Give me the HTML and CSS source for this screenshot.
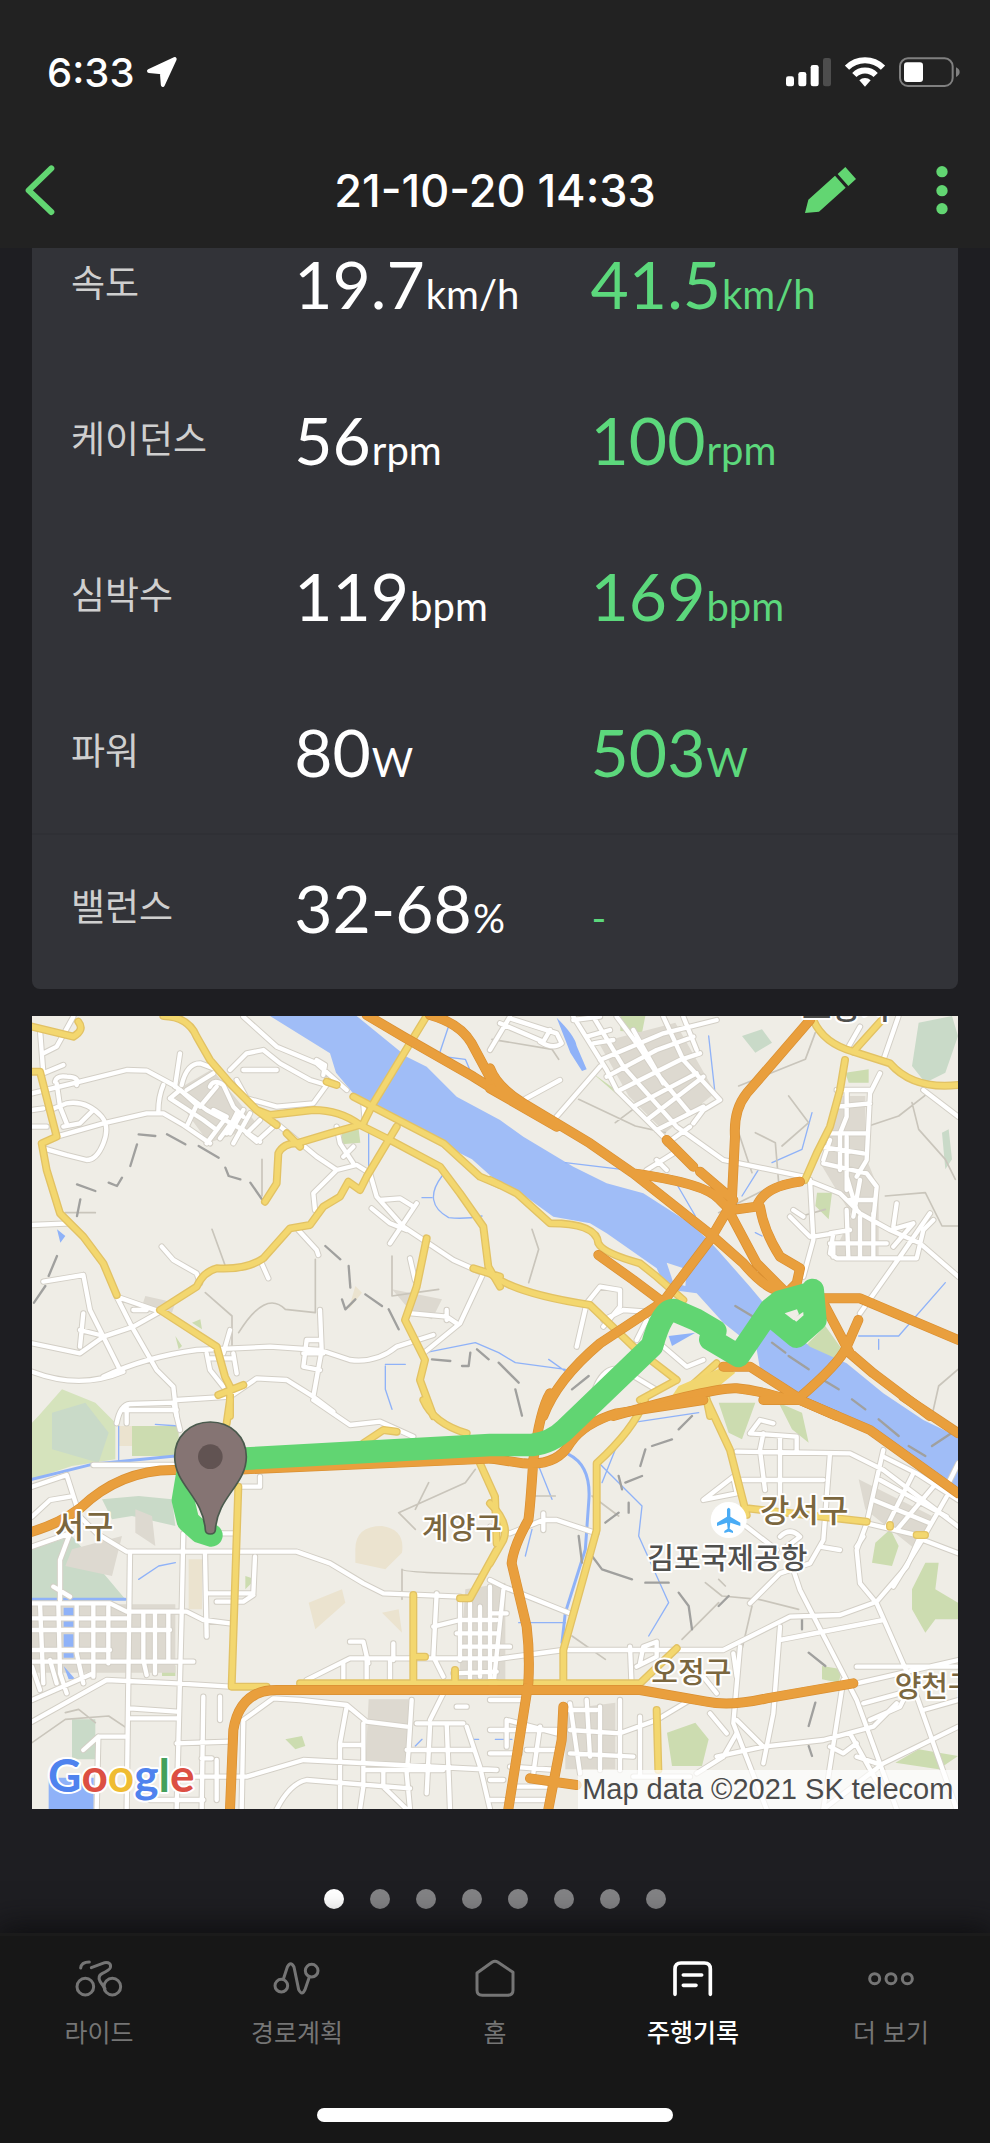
FILE: index.html
```html
<!DOCTYPE html>
<html lang="ko">
<head>
  <meta charset="UTF-8" />
  <meta name="viewport" content="width=device-width, initial-scale=1" />
  <title>주행기록 21-10-20 14:33</title>
  <link rel="stylesheet" href="styles.css">
</head>
<body>

<header class="topbar">
  <div class="status">
    <span class="time">6:33</span>
    <svg class="location" viewBox="0 0 94 96" aria-hidden="true"><path d="M87 9 51 87 48 49 9 45Z"/></svg>
    <div class="signals">
      <svg width="45" height="30" viewBox="0 0 135 90" aria-hidden="true">
        <g fill="#fff"><rect y="58" width="24" height="30" rx="7"/><rect x="37" y="45" width="24" height="43" rx="7"/><rect x="74" y="24" width="24" height="64" rx="7"/></g>
        <rect x="111" y="3" width="24" height="85" rx="7" fill="#4d4d4d"/>
      </svg>
      <svg width="40" height="30" viewBox="0 0 120 90" aria-hidden="true">
        <g fill="none" stroke="#fff" stroke-width="18"><path d="M6 32A76 76 0 0 1 114 32"/><path d="M28 54A45 45 0 0 1 92 54"/></g>
        <path d="M60 89 43 70A24 24 0 0 1 77 70Z" fill="#fff"/>
      </svg>
      <svg width="61" height="30" viewBox="0 0 183 90" aria-hidden="true">
        <rect x="3" y="4" width="158" height="83" rx="24" fill="none" stroke="#808080" stroke-width="6"/>
        <rect x="15" y="16" width="57" height="59" rx="9" fill="#fff"/>
        <path d="M171 31Q182 36 182 45T171 60Z" fill="#808080"/>
      </svg>
    </div>
  </div>
  <div class="titlebar">
    <button class="icon-btn back" aria-label="뒤로">
      <svg width="34" height="54" viewBox="0 0 102 162"><path d="M82 16 14 82 82 147"/></svg>
    </button>
    <h1>21-10-20 14:33</h1>
    <div class="actions">
      <button class="icon-btn" aria-label="편집">
        <svg width="54" height="50" viewBox="0 0 162 150"><path d="M93 32 125 68 45 140 3 144 13 104ZM124 6 156 42 133 63 101 27Z"/></svg>
      </button>
      <button class="icon-btn more" aria-label="메뉴">
        <svg width="14" height="50" viewBox="0 0 42 150"><circle cx="21" cy="20" r="17"/><circle cx="21" cy="77" r="17"/><circle cx="21" cy="131" r="17"/></svg>
      </button>
    </div>
  </div>
</header>

<main>
  <table class="stats">
    <tbody>
      <tr><th scope="row">속도</th><td>19.7<small>km/h</small></td><td class="max">41.5<small>km/h</small></td></tr>
      <tr><th scope="row">케이던스</th><td>56<small>rpm</small></td><td class="max">100<small>rpm</small></td></tr>
      <tr><th scope="row">심박수</th><td>119<small>bpm</small></td><td class="max">169<small>bpm</small></td></tr>
      <tr><th scope="row">파워</th><td>80<small>W</small></td><td class="max">503<small>W</small></td></tr>
      <tr class="balance"><th scope="row">밸런스</th><td>32-68<small>%</small></td><td class="max"><small>-</small></td></tr>
    </tbody>
  </table>

  <svg class="map" viewBox="0 0 2778 2379" role="img" aria-label="주행 경로 지도">
    <defs>
      <!-- small streets -->
      <g id="streets">
        <g transform="translate(-6 -18)">
          <path d="M6 250 150 215 290 180 350 182 430 225 530 300 640 360 690 395M80 380 220 340 350 310 400 310 460 345 540 400M30 60 40 190M40 130 80 110 130 20M40 190 100 165M80 220 90 290 110 340M75 215Q80 195 110 200 150 200 140 225M60 300 110 280Q170 270 215 320 240 350 220 400 200 450 170 450L110 435 40 415M100 350 150 340 190 300M6 300 40 295M6 350 50 350"/>
          <path d="M450 130 435 230M455 225Q470 160 510 160L550 175M400 225Q385 260 385 305M420 265 450 240 500 285 470 350M420 265 520 330 560 360M470 240 550 190M550 300 590 320 530 400M510 290 560 230M540 230Q550 205 580 225L610 290 640 320M600 180 650 130 700 120 750 160 840 210 890 225 850 280 740 290 650 265 620 210M640 180 740 180M640 20 740 110 860 160 950 240M860 150 885 165 880 195M640 300 600 370M660 310 610 400M690 330 650 370 680 395 740 340M620 310 590 370M570 385 610 330"/>
          <path d="M740 340 860 440 920 480 980 465 1020 490 1040 560 1120 650 1270 750 1360 790 1290 940 1180 1030M920 480 850 550 855 600M920 350 930 400 970 460M940 440 970 410M1050 570 1110 565 1150 590M1160 580 1080 700M1025 595 1080 640 1130 660M1000 280 1005 340M1140 745 1155 810M805 660 860 720 865 735M695 760 715 805M395 710 430 750 500 790 510 820M6 645 120 640"/>
          <path d="M260 860 390 905 310 950 220 980 150 1030 6 1000M260 860 300 940 380 1080 430 1130 440 1218M160 795 40 815M160 795 180 900 230 1000 270 1080M160 910 150 1010M150 960 210 975M310 900 350 900M220 1100Q350 1040 500 1020L720 1010 870 1020 960 1050Q1040 1060 1100 1010L1210 975M6 1085Q150 1140 280 1085M600 960 580 1030M530 1030 540 1080 580 1130M610 1030 620 1090M540 1045H610M830 990 820 1070 870 1080M830 990H870M820 1030H880M870 900 875 1020 850 1160M440 1170 600 1160 680 1105 770 1110 850 1160 910 1205M280 1200H440M1145 910 1250 920 1280 940M1250 900V930"/>
        </g>
        <g transform="translate(1374 -18)">
          <path d="M0 120 60 20M30 40 160 95 180 60M150 95Q190 120 215 100L200 70 60 25M250 20 350 180 380 240 530 390M310 20 400 170 480 260 560 350 700 450 940 500M380 20 440 100 500 190 600 310M430 60 520 220M520 20 580 150 690 270 640 300 610 340M580 20 620 120M330 150 520 70 680 30M350 200 500 120 610 80M390 240 570 150 630 130M430 290 620 190M470 330 640 200M500 360 640 290M250 30 330 20M290 80 360 60M310 100 370 90M200 320 330 170M100 270 210 210M470 480 550 430M500 450 530 480M600 350 530 400"/>
          <path d="M1110 50 1070 120M1180 150 1225 20M1170 190 1140 250 1130 450 1100 500M1040 240H1140M1040 290 1140 280M1070 240 1070 320 1050 370 1050 480M1010 370H1130M990 410 1120 430M1000 460 1130 490 1160 530 1150 630M1070 380V540M1020 390 1000 450M1300 240 1405 320M950 510 1050 550 1110 610 1200 660 1290 700 1405 800M1070 500 1100 600M1110 510 1090 620M1080 570H1150M1070 600 1075 740M1110 620V740M1150 610V740M1200 660 1270 640 1210 710M1020 670 1080 660M1020 700H1190M960 510 970 690 940 800M960 680 900 620M910 600 940 620M970 680 1030 670 1020 730 1040 745H1280L1300 660 1330 630M1030 700V740M1220 580 1210 650M1320 610 1230 740 1110 910M260 1010 290 880 330 830 390 840 390 890 340 950M340 930 400 900 470 905M520 1010 590 1070 640 1050M310 1150Q340 1060 400 1080L500 1140M440 990 470 930"/>
        </g>
        <g transform="translate(-6 1152)">
          <path d="M260 70Q270 15 300 12L430 8 450 90M290 20V70M6 260 110 225 150 350 200 400 290 455H800L900 490 1000 550 1060 580 1290 590M190 195H430M6 350 60 300 120 290M6 440 120 400 90 480V600M70 560 120 590M300 455 290 1228M460 400 455 640 440 1228M525 460 530 710M530 580H670L675 470M560 605H640L670 585M570 400H620M620 260H690V230M6 610H240L290 635H470L520 660 600 670M6 655H290M6 690H420M6 750H240M6 785H490M30 610 40 850M85 610 90 820 110 880M140 610V760L160 850M190 610V830M235 620V790M340 640V780L350 825M375 640V820M415 640V780M6 965 230 840 440 850 600 860M6 800 30 870M60 780 80 850M6 900 190 820M300 925 440 935M300 955H440M205 1010H290M205 1010 200 1228M160 1050 205 1010M440 1030 600 1025M520 890 515 1228M570 890V960M515 1075H545M440 1130H650L820 1080 1400 1110M560 1080V1200M360 1200H520M635 1228 640 960 730 895 810 900 950 915 1010 965 1130 980M740 1228Q780 1150 830 1140L1140 1165M950 920 930 1030 930 1228M1000 970 1000 1160 990 1228M1145 900 1135 1060 1130 1120 1140 1228M930 1035H1000M1000 1110H1240M1130 1050H1330M1200 980 1190 1180M1250 970 1260 1228M1310 980 1350 1100 1380 1228M1160 970H1300M1060 1110V1160L1130 1228"/>
          <path d="M830 840 960 775H1400M940 790V850M1010 780V850M1080 780V850M960 725H1000L1015 790M1090 730V780M1220 580 1210 770 1240 830M1210 680 1290 660H1400M1290 600V780M1320 610V860M1350 620V830M1380 560V860M1250 860 1200 960M1280 700H1400M1300 740H1400M1270 820 1400 815M1280 920H1310M850 0 960 75 1050 65 1150 110"/>
        </g>
        <g transform="translate(1374 1152)">
          <path d="M0 380 60 400 160 360H200L320 400M160 340V390M0 540 40 560 240 640M40 570 10 860M0 640H50M60 740 0 740M0 780 220 750 700 750 900 650 1050 645 1160 605 1250 500 1290 410M420 740 425 860M450 790 460 740 500 725V770L440 800M750 740 730 970 830 1228M730 760 740 830M870 680 850 940 820 1090M870 720 1180 660M900 480 930 570 1100 900 1220 1228M1180 150 1130 370 1100 450 1110 550 1160 610 1270 860 1400 1228M1130 370 1300 410M740 155 1080 160 1180 210 1405 380M780 100 810 60 850 70M780 100 920 110 920 150M820 100 810 150 825 270M870 110V290M740 240H1000M1020 160 1000 420 960 490 870 520 780 610M990 440 1050 450M770 380 860 450M870 410Q900 380 930 410L890 440"/>
          <path d="M1180 170 1280 220 1405 300M1170 240 1370 350M1150 300 1320 370M1270 220 1190 380M1330 260 1220 390M1370 290 1290 430 1210 560M1300 420 1405 460M1120 410 1100 440M1100 850 1405 780M1100 800H1400M1120 910 1230 880M1140 960 1230 920 1250 880M600 900 500 960 390 1000 240 990M740 1000 700 1070 620 1120M660 940 710 1000M740 960 820 1040 1000 1020 1150 980 1220 910M680 1070 820 1040M1000 1228 1180 1090 1405 980M1080 1000 1180 1180M1020 1040 1060 1060 1100 1030M1100 1070 1160 1090M1300 930 1405 900M1060 840 1000 1228M640 830 680 880M330 920V1110M290 900 300 1070M240 910 270 1120M390 900V1110M450 950V1130M240 1060 430 1070M200 1000 50 960V1040M0 990H220M0 1060H90M110 1050H200M60 1100 200 1110M150 980 130 1120M60 1160H180M70 1200H180M0 900H100M220 930H320M430 1130H600M0 1140H40M0 1200H40M1370 260 1405 190M640 300 730 230 740 280Z"/>
        </g>
      </g>

      <g id="avenues">
        <g transform="translate(-6 -18)">
          <path d="M400 18Q475 20 500 80L540 150 600 220 680 300 740 345M6 50 130 80Q165 60 145 35M6 185H30L80 380 35 400 50 480 90 610 160 680 220 760 260 855M705 575 740 520 745 430Q760 400 800 400L900 370 990 345M680 300 720 315 850 300Q930 300 990 345L1080 390 1230 470 1290 550 1360 650 1375 770 1410 830M1190 18 1030 280 1000 340M1100 350 1010 500 990 540 955 515 930 560 880 590 840 645 780 655 700 745Q650 780 560 775 520 785 500 830L390 900 560 1010 585 1100 600 1130 600 1218M890 215 920 225M970 260 1240 400 1350 500 1410 525M1190 685 1160 830 1125 930 1185 1050 1170 1110 1210 1218M565 1155 640 1125M1330 775 1410 800M770 370 810 410"/>
        </g>
        <g transform="translate(1374 -18)">
          <path d="M0 510 80 550 180 640Q320 640 325 700 340 730 450 760L500 800 580 870M0 790Q70 850 300 885L430 1010 560 1110M970 30Q1000 100 1090 125L1200 160Q1270 240 1405 225M1180 25 1090 125M1065 150 1050 240 1020 350 980 430 945 510M590 1140 680 1060M640 1120 660 1218M450 1170 560 1110"/>
        </g>
        <g transform="translate(-6 1152)">
          <path d="M600 0 590 70M625 260 605 860 710 860M810 850H1400M1150 585V850M1150 770H1185M1275 810V850M1000 130 1060 90 1100 95M1180 0Q1210 70 1310 100M1350 190 1395 290 1400 430M1290 595H1320L1400 450"/>
        </g>
        <g transform="translate(1374 1152)">
          <path d="M465 0Q430 90 320 190V390L220 750V850M0 850H450L560 745M650 0 720 150 770 345M770 325 1130 365M0 310Q60 370 40 420L0 490M500 930 505 1110M1280 405H1305M1200 375V380"/>
        </g>
      </g>

      <g id="highways">
        <g transform="translate(-6 -18)"><path d="M1010 15 1120 80 1330 200 1410 250M1200 15Q1290 40 1325 100L1400 240"/></g>
        <g transform="translate(1374 -18)">
          <path d="M0 175Q20 230 100 280L300 400 430 490 670 680 760 760Q820 830 860 840L920 845M0 235 200 350M430 490Q650 520 690 570L720 600M530 390 610 470M630 485 730 570M960 30 770 250Q730 300 735 380L725 580Q700 620 660 690L520 875 330 1000Q200 1110 160 1218M725 600 800 590Q820 530 930 515M720 610 800 760 880 840M810 590Q820 660 870 740L930 775 920 820 900 840M325 735 430 810 510 870M1000 865H1110L1405 990M990 860 1080 1030 1150 1090 1320 1218M1105 930 1070 1010Q1050 1060 920 1170M370 1218Q680 1130 740 1135 800 1140 900 1170H930L1040 1218M700 1070 780 1070 920 1160"/>
        </g>
        <g transform="translate(-6 1152)"><path d="M6 395Q90 370 150 325 270 210 430 210H600L1400 175M600 1228 610 990Q630 870 740 870H1400"/></g>
        <g transform="translate(1374 1152)">
          <path d="M180 -20Q150 30 130 180 120 330 115 360 70 440 65 490L110 680Q120 760 115 850L55 1228M0 175 100 190Q200 200 240 130 280 70 380 40L640 0M0 870H450L650 905Q720 920 830 895L1090 850M820 0H930L1140 90 1405 280M1240 -10 1405 100M220 920 215 1020 175 1228M120 1135 260 1155"/>
        </g>
      </g>
    </defs>

    <rect width="2778" height="2379" fill="#efede6"/>

    <!-- parks -->
    <g fill="#ccdcb0">
      <path d="M20 1199 90 1120 190 1160 250 1220V1330L120 1350 0 1390V1220Z" fill="#d5e3bc"/>
      <path d="M60 1190 160 1160 230 1250 200 1340 60 1300Z" fill="#c9dac8"/>
      <path d="M300 1230H440V1320H300ZM930 345 980 340 985 380 930 385ZM1765 0H1840L1830 50 1765 45ZM1680 170 1790 250 1760 240ZM1975 210 2015 220 2005 300 1980 270ZM2440 170 2510 160V200H2450ZM2355 530H2400L2390 610 2350 570ZM2060 1160H2170L2130 1270 2090 1250ZM2240 1160 2310 1190 2330 1280 2280 1240ZM2320 990 2380 930 2430 1000 2410 1030ZM2530 1580 2575 1540 2600 1590 2580 1650 2520 1640ZM2640 1720 2680 1640 2720 1640 2710 1720 2778 1760V1810H2710L2680 1850 2640 1780ZM1905 2150 1990 2120 2030 2170 2010 2250 1920 2250ZM2370 1950 2430 1960 2420 2000 2370 1990ZM2590 2240 2660 2200 2778 2220 2720 2260ZM760 2170 810 2160 820 2190 790 2200ZM640 1680 670 1690 640 1720ZM390 1950H430V1980H390ZM240 1890H280V1905H240ZM345 1850H365V1920H345ZM480 920 505 910 510 940ZM430 960 450 990 440 1000Z"/>
      <g fill="#c9dac8"><path d="M0 1600 120 1560 280 1750H0ZM210 1450 320 1440 420 1450 430 1530 300 1500 240 1510ZM120 2110H190V2230H120ZM2130 60 2190 40 2220 80 2170 110ZM2660 20 2760 0 2778 60 2740 170 2680 200 2640 150ZM2730 350 2750 340 2760 430 2740 460Z"/></g>
    </g>
    <g fill="#ebe3cf"><path d="M970 1600Q970 1530 1050 1530 1120 1540 1110 1610L1060 1660 970 1640ZM830 1760 930 1720 940 1760 850 1840ZM470 1630H510V1780H470ZM1050 1790 1100 1780 1110 1850ZM970 810 990 830 950 880ZM258 1230H300V1290H258Z"/></g>
    <g class="blocks"><path d="M420 230 540 160 680 330 530 380ZM1700 80 1930 20 2050 230 1900 350 1790 240ZM2420 240H2500V420L2540 520V720H2400L2460 600 2370 450ZM0 1765H430V1970H0ZM1010 2050H1130V2250H1000ZM120 1600 270 1560 240 1680 100 1650ZM1300 1720 1420 1700V2000H1280ZM1600 2080 1750 2060V2260H1600ZM2480 1390 2700 1500 2650 1600 2500 1480ZM340 840 430 860 420 890 330 870ZM1080 820 1230 850 1200 910 1140 890ZM310 1480 360 1500 370 1590 310 1550Z"/></g>

    <!-- river, canals and ponds -->
    <g fill="#a0bdf7">
      <path d="M714 0 894 112 912 170 970 240 1100 310 1230 385 1320 430 1404 505 1454 522 1564 602 1674 622 1724 652 1874 757 1904 820 1994 832 2074 920 2174 1000 2184 1060 2264 1110 2354 1172 2504 1242 2778 1424V1262L2674 1212 2554 1132 2444 1042 2334 992 2204 872 2154 812 2039 682 1974 622 1834 532 1724 502 1624 452 1474 362 1404 312 1274 242 1184 152 1124 122 974 0Z"/>
      <path d="M50 2285H185V2379H50ZM1574 5Q1630 60 1634 90L1664 160 1650 165 1615 110ZM1910 960 1990 950 1920 990ZM95 1775H125V1835H95ZM95 1855H125V1925H95ZM95 1950 130 1990 110 1990ZM75 640 100 660 85 680Z" fill="#8fb2f8"/>
      <path d="M1904 740 1964 760 1960 810 1924 800Z" fill="#efede6"/>
    </g>
    <g class="streams"><path d="M0 1390 180 1345 430 1320M0 1750H280M1610 1315Q1680 1350 1670 1460L1660 1600 1600 1790 1590 1880" stroke-width="9"/><path d="M1250 30 1220 120 1300 130 1330 200M260 1230V1340M370 1225 440 1230M1010 340V460M1230 480Q1170 560 1250 605 1300 610 1350 600M1170 545H1200M1180 1010 1330 980 1400 1010M1060 1050V1120L1080 1180M1120 1045H1060M1600 440 1850 470 1920 480 1990 600M2030 60 2050 240M2340 290 2310 400 2220 440M2130 540 2180 460M2170 650 2190 660M2480 960H2600L2740 800M2540 970V1000M1400 1010 1450 1040 1600 1060M1550 1030 1620 1080M1700 1340 1830 1470 1820 1560 1910 1760 1850 1860M1800 1220 2000 1190M1460 1820H1600M1710 1400 1770 1250M320 1690 380 1650 430 1640M1150 2190 1170 2170M1310 2170H1340M1390 2170H1440M1520 1350 1560 1450M1480 1620 1500 1540" stroke-width="4"/></g>

    <!-- footpaths and ridge lines -->
    <g class="paths"><path d="M100 590H190M690 430V540M540 640 580 750M620 950Q700 820 760 880L850 890V730M520 830 600 900V990M1080 720V840L1150 830 1220 820M1330 1360 1300 1400 1100 1490 1150 1540M1190 1400 1150 1480M1110 1750V1660Q1110 1670 1350 1675M1380 70 1560 100 1580 130M1640 250 1810 330 1900 350M1750 320 1830 260M1500 640 1520 700 1490 800M2120 210 2320 130 2350 50M2270 240 2330 320 2250 390M2110 320 2160 470M2060 590 2180 530 2240 500 2230 380 2170 350M2310 600 2380 580M2510 330 2600 300 2690 230M2640 260 2660 340 2740 430 2770 490M2560 540 2680 530 2730 630 2778 630M2700 1199 2720 1110 2778 1060M2020 1700 2070 1740 2180 1750 2300 1780M2160 1770 2130 1900M2060 1690 2080 1710M1760 1500 1680 1440M0 2180 100 2110 230 2100 290 2140M100 2090 140 2080 190 2120M1950 1870 2060 1760M1620 1860 1720 1930M1500 1440 1570 1440"/></g>
    <g class="ridges"><path d="M135 505 190 525M230 500 255 510 270 485M295 450 315 385M320 355 370 360M405 355 460 385M500 390 560 425M580 455 590 480 625 490M655 500 690 550M145 550 135 600M75 720 50 780M6 860 40 810M880 690 925 730M950 750 955 815M930 850 940 880 970 850M1000 835 1050 870M1070 880 1100 940M1200 1030 1255 1035M1290 1050 1310 1050 1315 1010M1335 1000 1370 1030M1400 1040 1460 1100M1450 1120 1470 1199M1620 1120 1670 1080M1980 1200 1940 1240M1860 1290 1920 1270M1825 1350 1840 1300M1760 1380 1770 1420M1780 1400 1830 1380M1720 1520 1760 1490M1790 1460 1790 1490M1640 1560 1650 1640M1680 1620 1710 1660 1800 1690M1840 1700H1910M1940 1730 1970 1770 1980 1840M2060 1770 2090 1740M2310 1810V1840M2330 1910 2380 1950M2350 2060 2330 2130M2330 2190 2340 2220M2110 870 2160 900M2220 980 2260 1010M2270 1020 2330 1060M2370 1090 2420 1120M2460 1150 2500 1180M2540 1210 2600 1260M2630 1290 2680 1320M2700 1290 2760 1250"/></g>

    <use href="#streets" class="street-edge"/>
    <use href="#streets" class="street"/>
    <use href="#avenues" class="avenue-edge"/>
    <use href="#avenues" class="avenue"/>
    <path d="M1940 1110 2080 1050 2110 1070 2000 1160 1900 1170Z" fill="#f1d66f"/>
    <use href="#highways" class="highway-edge"/>
    <use href="#highways" class="highway"/>

    <!-- ridden route -->
    <path class="route" d="M538 1558 505 1548 468 1515 453 1452 465 1380 480 1330 640 1328 1374 1287H1500Q1560 1280 1600 1240L1860 990Q1890 880 1925 882L1990 910 2050 945 2035 970 2120 1020 2215 880 2244 857 2334 832 2342 822 2350 912 2294 962 2225 905 2310 850"/>
    <path d="M2258 892 2295 880 2301 895 2285 913Z" fill="#efede6"/>

    <!-- start pin -->
    <g class="pin" transform="translate(-6 1152)">
      <path d="M541 66C480 66 434 110 434 170 434 255 520 290 526 390Q527 402 541 402T556 390C562 290 649 255 649 170 649 110 602 66 541 66Z"/>
      <circle cx="541" cy="170" r="37"/>
    </g>

    <g class="airport">
      <circle cx="2090" cy="1512" r="54"/>
      <path d="M2085 1480Q2090 1470 2095 1480V1502L2125 1520V1530L2095 1520 2093 1538 2103 1545V1551L2090 1547 2077 1551V1545L2087 1538 2085 1520 2055 1530V1520L2085 1502Z"/>
    </g>

    <g class="labels">
      <text x="68" y="1566" class="district">서구</text>
      <text x="1170" y="1570">계양구</text>
      <text x="2184" y="1518" class="district">강서구</text>
      <text x="1846" y="1658" class="place">김포국제공항</text>
      <text x="1858" y="2000">오정구</text>
      <text x="2588" y="2044">양천구</text>
      <text x="2310" y="8" class="place district">고양시</text>
    </g>

    <rect x="1638" y="2262" width="1140" height="117" fill="#fff" opacity=".7"/>
    <text class="credit" x="2764" y="2348">Map data ©2021 SK telecom</text>
    <text class="google" x="48" y="2328"><tspan fill="#4f83ee">G</tspan><tspan fill="#dc4f43">o</tspan><tspan fill="#efbc32">o</tspan><tspan fill="#4f83ee">g</tspan><tspan fill="#43a05b">l</tspan><tspan fill="#dc4f43">e</tspan></text>
  </svg>

  <div class="pager">
    <button class="current" aria-label="1 페이지"></button>
    <button aria-label="2 페이지"></button>
    <button aria-label="3 페이지"></button>
    <button aria-label="4 페이지"></button>
    <button aria-label="5 페이지"></button>
    <button aria-label="6 페이지"></button>
    <button aria-label="7 페이지"></button>
    <button aria-label="8 페이지"></button>
  </div>
</main>

<footer>
  <nav class="tabs">
    <a href="#">
      <svg width="50" height="39" viewBox="0 0 150 117"><circle cx="34" cy="83" r="25"/><circle cx="115" cy="83" r="25"/><path d="M20 27Q22 9 46 9M52 26 92 11Q113 9 109 26 107 33 84 44 70 52 78 67L93 89"/></svg>
      라이드
    </a>
    <a href="#">
      <svg width="50" height="39" viewBox="0 0 150 117"><circle cx="28" cy="80" r="19"/><circle cx="119" cy="35" r="19"/><path d="M34 61 46 24Q56 4 66 24L80 92Q90 112 99 92L112 54"/></svg>
      경로계획
    </a>
    <a href="#">
      <svg width="40" height="39" viewBox="0 0 120 117"><path d="M6 42 52 9Q60 4 68 9L114 40V94Q114 109 98 109H22Q6 109 6 94Z"/></svg>
      홈
    </a>
    <a href="#" class="active" aria-current="page">
      <svg width="40" height="39" viewBox="0 0 120 117"><path d="M6 106V30Q6 12 24 12H94Q112 12 112 30V106M31 48H86M31 79H69"/></svg>
      주행기록
    </a>
    <a href="#">
      <svg width="50" height="39" viewBox="0 0 150 117"><circle cx="26" cy="59" r="15"/><circle cx="75" cy="59" r="15"/><circle cx="124" cy="59" r="15"/></svg>
      더 보기
    </a>
  </nav>
  <div class="home-indicator"></div>
</footer>

</body>
</html>
```
FILE: styles.css
```css
* {
  box-sizing: border-box;
}

body {
  margin: 0;
  min-height: 100vh;
  display: flex;
  flex-direction: column;
  background: #1e1e22;
  color: #fff;
  font-family: "Noto Sans CJK KR", sans-serif;
}

button {
  padding: 0;
  border: none;
  background: none;
  cursor: pointer;
}

svg {
  display: block;
}

/* top */
.topbar {
  position: relative;
  z-index: 1;
  height: 248px;
  background: #222;
  font-family: Inter, "Noto Sans CJK KR", sans-serif;
}

.status {
  display: flex;
  align-items: center;
  height: 144px;
  padding: 0 30px 0 47px;
}

.time {
  font-size: 40px;
  font-weight: 500;
}

.location {
  width: 31px;
  height: 32px;
  margin-left: 12px;
  fill: #fff;
  stroke: #fff;
  stroke-width: 12;
  stroke-linejoin: round;
}

.signals {
  display: flex;
  gap: 14px;
  margin-left: auto;
}

.titlebar {
  display: grid;
  grid-template-columns: 1fr auto 1fr;
  align-items: center;
  height: 92px;
  padding: 0 24px;
}

.titlebar h1 {
  margin: 0;
  font-size: 45px;
  font-weight: 500;
}

.icon-btn {
  fill: #62d672;
}

.back {
  justify-self: start;
}

.back svg {
  fill: none;
  stroke: #62d672;
  stroke-width: 18;
  stroke-linecap: round;
  stroke-linejoin: round;
}

.actions {
  display: flex;
  align-items: center;
  justify-content: flex-end;
  gap: 60px;
}

.more {
  display: flex;
  justify-content: center;
  width: 48px;
}

/* ride summary */
main {
  padding: 0 32px;
}

.stats {
  width: 100%;
  margin-top: -39px;
  border-collapse: collapse;
  table-layout: fixed;
  background: #323338;
  border-radius: 8px;
}

.stats tr {
  height: 156px;
}

.stats .balance {
  box-shadow: inset 0 2px #2f3035;
}

.stats th {
  width: 28%;
  padding: 0 0 12px 39px;
  color: #cfcfcf;
  font-size: 37px;
  font-weight: 400;
  text-align: left;
}

.stats td {
  padding: 4px 0 0 3px;
  font-family: Lato, sans-serif;
  font-size: 66px;
  line-height: 80px;
  white-space: nowrap;
}

.stats td:nth-child(2) {
  width: 32%;
}

.stats small {
  margin-left: 1px;
  font-size: 40px;
}

.stats .max {
  color: #5cd87c;
}

/* map */
.map {
  width: 100%;
  height: auto;
  margin-top: 27px;
}

.map use,
.streams,
.paths,
.ridges,
.route {
  fill: none;
  stroke-linejoin: round;
  stroke-linecap: round;
}

.blocks { fill: #ddd9d0; }
.streams { stroke: #8fb2f8; }
.paths { stroke: #c9c5bb; stroke-width: 5; }
.ridges { stroke: #a0a09e; stroke-width: 7; }
.street-edge { stroke: #d3cfc6; stroke-width: 19; }
.street { stroke: #fff; stroke-width: 13; }
.avenue-edge { stroke: #e2c264; stroke-width: 24; }
.avenue { stroke: #f3d76f; stroke-width: 16; }
.highway-edge { stroke: #d98f32; stroke-width: 30; }
.highway { stroke: #e99f3d; stroke-width: 26; }
.route { stroke: #61d572; stroke-width: 68; }

.pin path {
  fill: #857473;
  stroke: #4a5a4d;
  stroke-width: 5;
}

.pin circle { fill: #615352; }
.airport circle { fill: #fff; }
.airport path { fill: #4aacf5; }

.labels text {
  fill: #7b673f;
  stroke: #fff;
  stroke-width: 12;
  stroke-linejoin: round;
  paint-order: stroke;
  font-size: 87px;
  font-weight: 500;
}

.labels .district { font-size: 96px; }
.labels .place { fill: #50504e; }

.credit {
  fill: #4b4b4b;
  font-family: "Liberation Sans", sans-serif;
  font-size: 87px;
  text-anchor: end;
}

.google {
  stroke: #fff;
  stroke-width: 12;
  stroke-linejoin: round;
  paint-order: stroke;
  font-family: Lato, sans-serif;
  font-size: 138px;
  font-weight: 700;
}

.pager {
  display: flex;
  justify-content: center;
  gap: 26px;
  padding-top: 80px;
}

.pager button {
  width: 20px;
  height: 20px;
  border-radius: 50%;
  background: #838385;
}

.pager .current {
  background: #fff;
}

/* bottom tabs */
footer {
  height: 210px;
  margin-top: auto;
  border-top: 3px solid #1b1b1b;
  background: #171717;
  box-shadow: 0 0 32px 4px #0c0c0d;
}

.tabs {
  display: grid;
  grid-template-columns: repeat(5, 1fr);
  padding-top: 23px;
}

.tabs a {
  display: flex;
  flex-direction: column;
  align-items: center;
  gap: 15px;
  color: #757575;
  font-size: 25px;
  line-height: 36px;
  text-decoration: none;
}

.tabs svg {
  fill: none;
  stroke: currentColor;
  stroke-width: 9;
  stroke-linecap: round;
  stroke-linejoin: round;
}

.tabs .active {
  color: #fff;
  font-weight: 500;
}

.tabs .active svg {
  stroke-width: 11;
}

.home-indicator {
  width: 36%;
  height: 14px;
  margin: 59px auto 0;
  border-radius: 7px;
  background: #fff;
}
```
